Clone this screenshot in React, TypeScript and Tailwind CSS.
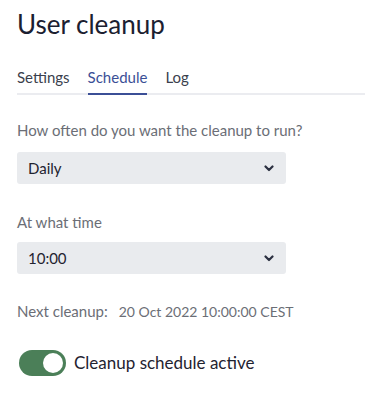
import React, { useState } from "react";

const FONT = { fontFamily: 'Lato, "Noto Sans", sans-serif' };

function Chevron() {
  return (
    <svg width="10" height="7" viewBox="0 0 10 7" className="text-[#2b3040]">
      <path d="M1.5 1.5 L5 5 L8.5 1.5" fill="none" stroke="currentColor" strokeWidth="2.2" strokeLinecap="round" strokeLinejoin="round" />
    </svg>
  );
}

function SelectBox({ value }: { value: string }) {
  return (
    <div className="w-[269px] h-8 bg-[#e9ebee] rounded-[3px] flex items-center justify-between pl-[11px] pr-[12px]">
      <span className="text-[15px] text-[#1f2330]">{value}</span>
      <Chevron />
    </div>
  );
}

export default function App() {
  const [tab, setTab] = useState("Schedule");
  const [active, setActive] = useState(true);
  const tabs = ["Settings", "Schedule", "Log"];

  return (
    <div className="w-[365px] h-[396px] bg-white pl-[17px] pt-[6px] overflow-hidden" style={FONT}>
      <h1 className="text-[26px] leading-[36px] text-[#1b2030] font-normal">User cleanup</h1>

      {/* Tabs */}
      <div className="mt-[25px] flex gap-[18px] border-b-2 border-[#ebecf0]">
        {tabs.map((t) => (
          <button
            key={t}
            onClick={() => setTab(t)}
            className={`text-[15px] leading-5 pb-[6px] -mb-[2px] border-b-2 cursor-pointer ${
              tab === t ? "text-[#3b4f96] border-[#3b4f96]" : "text-[#3a3f4d] border-transparent"
            }`}
          >
            {t}
          </button>
        ))}
      </div>

      <p className="mt-[25px] text-[15px] leading-5 text-[#6b6e76]">How often do you want the cleanup to run?</p>
      <div className="mt-[12px]">
        <SelectBox value="Daily" />
      </div>

      <p className="mt-[28px] text-[15px] leading-5 text-[#6b6e76]">At what time</p>
      <div className="mt-[10px]">
        <SelectBox value="10:00" />
      </div>

      <div className="mt-[27px] flex items-baseline text-[15px] leading-5 text-[#6b6e76]">
        <span>Next cleanup:</span>
        <span className="ml-[11px] text-[14px]">20 Oct 2022 10:00:00 CEST</span>
      </div>

      <div className="mt-[28px] flex items-center gap-[8px] pl-[2px]">
        <button
          onClick={() => setActive(!active)}
          className={`w-[47px] h-[26px] rounded-full flex items-center px-[3px] cursor-pointer ${
            active ? "bg-[#4b7f58] justify-end" : "bg-[#c1c7d0] justify-start"
          }`}
        >
          <span className="w-5 h-5 rounded-full bg-white block" />
        </button>
        <span className="text-[17px] text-[#1f2330]">Cleanup schedule active</span>
      </div>
    </div>
  );
}
